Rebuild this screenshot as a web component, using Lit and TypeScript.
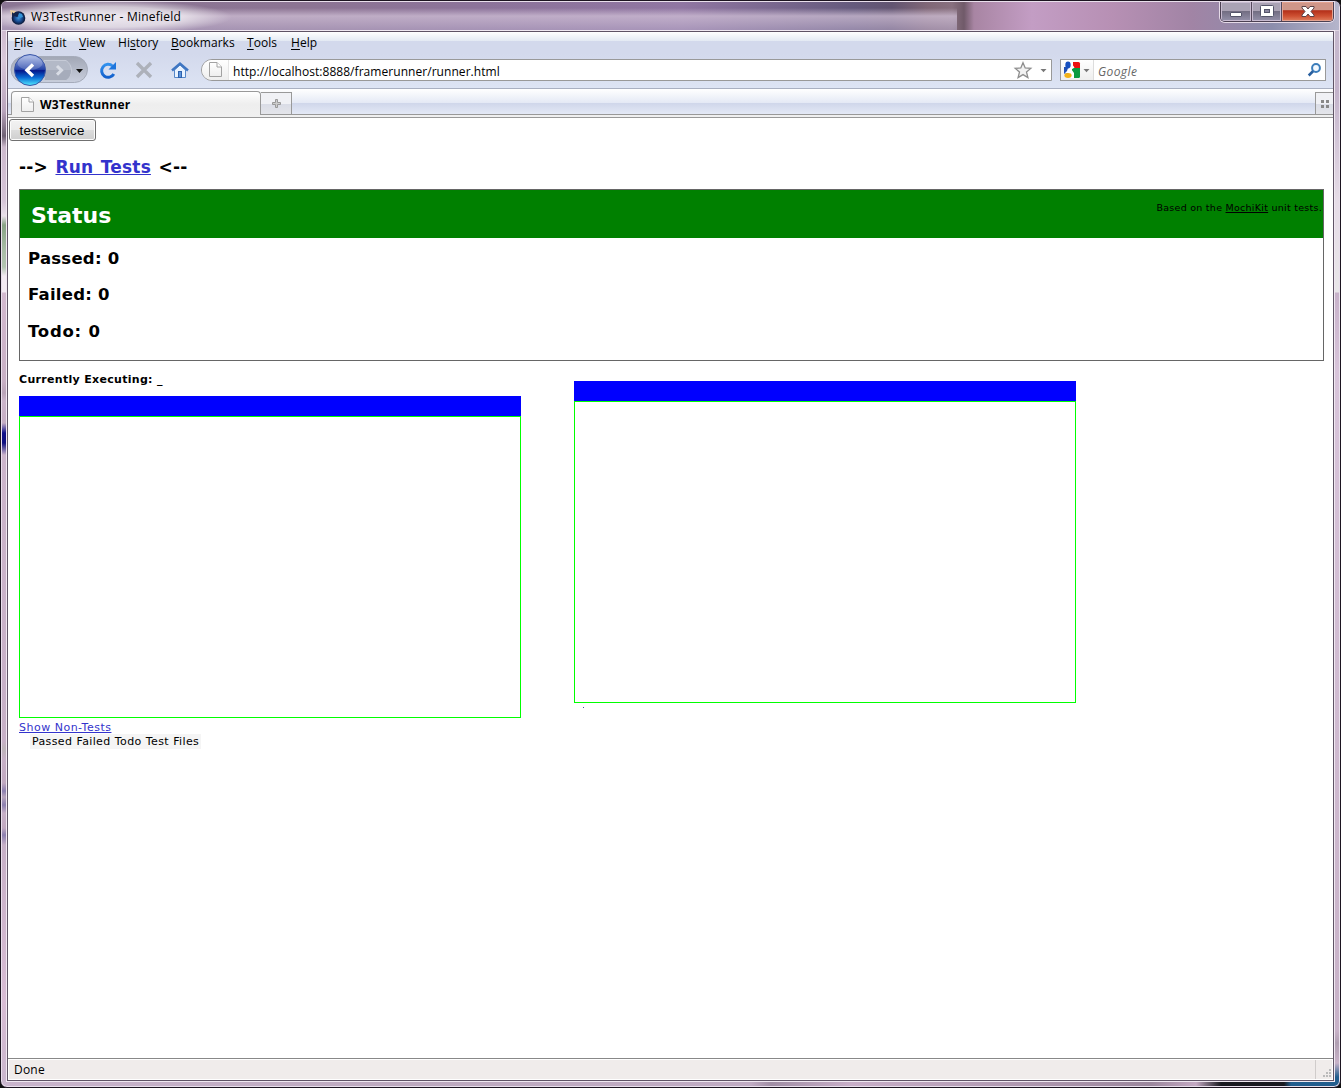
import { LitElement, html, css, svg } from "lit";
import { customElement } from "lit/decorators.js";

const MENU = [
  ["", "F", "ile", 19], ["", "E", "dit", 22], ["", "V", "iew", 27], ["Hi", "s", "tory", 41],
  ["", "B", "ookmarks", 64], ["", "T", "ools", 32], ["", "H", "elp", 27],
] as const;

const pageIcon = svg`<path d="M.5 .5H8L12.500 5V14.500H.5Z" fill="url(#pg)" stroke="#a2a2a2"/><path d="M8 .5V5H12.500" fill="#fff" stroke="#a2a2a2"/>
  <defs><linearGradient id="pg" x2="0" y2="1"><stop offset="0" stop-color="#fff"/><stop offset="1" stop-color="#eee"/></linearGradient></defs>`;

@customElement("app-root")
export class AppRoot extends LitElement {
  static styles = css`
    :host { display: block; width: 1341px; height: 1088px; overflow: hidden; background: #111; font-family: "Open Sans", "Noto Sans", sans-serif; font-size: 12px; color: #000; }
    * { box-sizing: border-box; }
    svg { display: block; flex: none; }
    .window { height: 1088px; border: 1px solid #1c1420; border-radius: 7px; box-shadow: inset 0 0 0 1px #e9dfec; padding: 1px 6px 6px; display: flex; flex-direction: column; overflow: hidden;
      background:
        linear-gradient(180deg, #c5aec5 0, #d9c8da 60px, #b9a4bc 110px, #6f6174 135px, #cdb9cd 146px, #d6c5d8 200px, #e9e0ea 215px, #88a385 224px, #a9bda6 250px, #b3c5b1 266px, #f3eaf2 275px, #f3eaf2 291px, #d3b9cf 292px, #c8b0c5 380px, #b9a4b8 392px, #cbb5ca 400px, #c5aec4 422px, #10108a 432px, #10107e 442px, #ccb5cb 454px, #c7b0c7 740px, #bdb4b9 748px, #c7b0c7 758px, #c1a9c0 782px, #8d80b0 790px, #b9a5bd 796px, #8d80b0 804px, #c7b0c7 812px, #c1a9c0 827px, #8d80b0 834px, #c7b0c7 844px, #d8bcd4 1000px, #c9b6cd 1088px) 0 0 / 8px 1086px no-repeat,
        linear-gradient(180deg, #c8bdd0 0, #c3b3ca 90px, #e6dce7 200px, #e8e5e8 291px, #c8b2ca 292px, #d8c4da 370px, #c8b2c8 1030px, #b09fb2 1042px, #c8b2c8 1062px, #225e8e 1076px) 1332px 0 / 8px 1086px no-repeat,
        linear-gradient(90deg, #c9b4cc 0, #bda9bf 400px, #c0abc3 750px, #a18ea5 770px, #c8aec8 850px, #9c879d 1150px, #c4a9c3 1195px, #191a20 1220px, #191a20 1283px, #225e8e 1290px) 0 1079px / 100% 9px no-repeat, #c3b3ca; }
    .title { height: 29px; margin: 0 -5px; padding-left: 8px; display: flex; align-items: flex-start; border-bottom: 1px solid #e0d5e3;
      background: radial-gradient(ellipse 125px 17px at 105px 15px, #fffb 0, #fff9 60%, #fff0 100%),
        linear-gradient(180deg, #d0c0d600 0, #d0c0d600 6px, #d0c0d6c0 14px, #b9abca90 28px) 0 0 / 955px 100% no-repeat,
        linear-gradient(90deg, #8b7694 0, #8c7493 300px, #8c739a 480px, #9076a2 680px, #655a7d 850px, #625471 890px, #806777 925px, #88707f 950px, #705a69 962px, #a885a3 972px, #c39dc4 1030px, #b790b4 1110px, #a184a5 1190px, #8c8dac 1270px, #b5b5cb 100%); }
    .title-icon { margin: 6px 5px 0 0; }
    .title-text { flex: 1; line-height: 29px; letter-spacing: .23px; }
    .controls { display: flex; margin-right: 5px; height: 20px; border: 1px solid #4b4052; border-top: 0; border-radius: 0 0 5px 5px; overflow: hidden; box-shadow: 0 0 0 1px #e5dae7; }
    .ctl { display: grid; place-items: center; width: 31px; border-right: 1px solid #55495c; box-shadow: inset 0 0 0 1px #c8bbd0; background: linear-gradient(#aaa2b4 0 45%, #706b80 46%, #9591aa); }
    .ctl.max { width: 30px; }
    .ctl.close { width: 51px; border-right: 0; box-shadow: inset 0 0 0 1px #e3a391; background: linear-gradient(#cf9689 0 40%, #b4301a 46%, #cf5234 75%, #df8060); }
    .ctl svg { margin-top: -1px; }
    .client { flex: 1; min-height: 0; display: flex; flex-direction: column; border: 1px solid #5f5365; background: #fff; margin: 0; box-shadow: 0 0 0 1px #f0e8f1; }
    .menu { height: 22px; flex: none; display: flex; gap: 12px; padding-left: 6px; line-height: 22px; background: linear-gradient(#fff 0, #e3e9f3 9px, #d3d9ec 9px); }
    .mi { white-space: nowrap; letter-spacing: .06px; }
    .u { text-decoration: underline; text-underline-offset: 2px; }
    .nav { height: 35px; flex: none; display: flex; align-items: flex-start; border-bottom: 1px solid #a9b0c2; background: linear-gradient(#d3d9ec 0, #dde4f4); }
    .navicons { margin-left: 2px; }
    .url { display: flex; width: 851px; height: 22px; margin-top: 5px; border: 1px solid #999; border-radius: 11px 0 0 11px; background: #fff; overflow: hidden; }
    .ident { width: 27px; padding: 2px 0 0 7px; background: linear-gradient(#fff, #eee); border-right: 1px solid #e5e5e5; }
    .addr { flex: 1; padding-left: 4px; line-height: 23px; letter-spacing: .05px; }
    .search { display: flex; width: 266px; height: 22px; margin: 5px 0 0 8px; border: 1px solid #999; background: #fff; }
    .engine { width: 33px; background: linear-gradient(#fff, #eee); border-right: 1px solid #ddd; }
    .ph { flex: 1; padding-left: 4px; line-height: 23px; font-style: italic; color: #666; letter-spacing: .4px; }
    .tabs { height: 26px; flex: none; display: flex; border-bottom: 1px solid #999; background: linear-gradient(#fff 0, #e4e9f5 14px, #cfd6ea 14px, #e4e9f6); }
    .tab { display: flex; width: 250px; height: 26px; margin: 2px 0 -1px 3px; padding: 5px 0 0 9px; border: 1px solid #999; border-bottom: 0; border-radius: 4px 4px 0 0; background: linear-gradient(#fff 0, #eee 12px, #f0f0f0); font-weight: 700; }
    .tab-text { margin: -1px 0 0 6px; line-height: 18px; letter-spacing: .22px; }
    .plus { width: 31px; height: 23px; margin-top: 3px; border: 1px solid #999; border-left: 0; display: grid; place-items: center; background: linear-gradient(#f0f1f5 0 50%, #d9dce6 50%, #e4e5ea); }
    .grow { flex: 1; }
    .alltabs { width: 18px; height: 22px; margin-top: 3px; border: solid #999; border-width: 1px 0 0 1px; padding: 7px 0 0 5px; background: linear-gradient(#f0f1f5 0 50%, #d9dce6 50%, #e4e5ea); }
    .strip { height: 3px; flex: none; background: #f0f0f0; border-bottom: 1px solid #999; }
    .page { flex: 1; min-height: 0; font-family: "DejaVu Sans", sans-serif; font-size: 11px; }
    .btn { display: block; margin: 1px 0 0 1px; width: 87px; height: 22px; padding: 1px 1px 0 0; border: 1px solid #707070; border-radius: 3px; box-shadow: inset 0 0 0 1px #fcfcfc; background: linear-gradient(#f2f2f2, #ebebeb 50%, #ddd 50%, #cfcfcf); font: 13.33px/20px "Liberation Sans", sans-serif; letter-spacing: .1px; color: #000; }
    .body { padding: 0 9px 0 11px; }
    .run { margin: 0; padding-top: 15px; font-size: 17px; line-height: 22px; font-weight: 700; height: 48px; letter-spacing: .17px; word-spacing: 1.5px; }
    .link { color: #33c; text-decoration: underline; }
    .box { height: 172px; border: 1px solid #666; }
    .head { height: 48px; background: #008000; display: flex; justify-content: space-between; }
    .h1 { margin: 0 0 0 11px; font-size: 22px; line-height: 52px; letter-spacing: -.04px; color: #fff; }
    .credit { font-size: 9.500px; line-height: 36px; padding-right: 1px; white-space: nowrap; letter-spacing: .265px; }
    .stat { margin: 0 0 0 8px; font-size: 16.500px; line-height: 36px; font-weight: 700; height: 36px; letter-spacing: .25px; }
    .stat.todo { padding-top: 1px; letter-spacing: .75px; }
    .stats { padding-top: 3px; }
    .cols { display: flex; gap: 53px; }
    .left { width: 502px; }
    .exec { font-weight: 700; line-height: 16px; padding-top: 11px; height: 35px; white-space: nowrap; letter-spacing: .31px; }
    .bar { width: 502px; height: 20px; background: #00f; }
    .frame { width: 502px; height: 302px; border: 1px solid #0f0; }
    .right { padding-top: 20px; }
    .dot { width: 1px; height: 1px; margin: 4px 0 0 9px; background: #4747a0; }
    .nt { line-height: 19px; height: 16px; letter-spacing: .5px; }
    .files { display: inline-block; margin-left: 11px; padding: 0 2px; height: 15px; line-height: 15px; background: #f5f5f5; white-space: nowrap; word-spacing: .4px; letter-spacing: .36px; }
    .status { height: 21px; flex: none; display: flex; border: 1px solid #fff; box-shadow: 0 -1px #888; background: #f0eceb; padding-left: 5px; line-height: 20px; letter-spacing: .2px; }
    .grip { width: 17px; border-left: 1px solid #d0cccb; padding: 9px 0 0 7px; }
  `;

  render() {
    return html`<div class="window">
      <div class="title">
        <svg class="title-icon" width="16" height="18" viewBox="0 0 16 18"><defs><radialGradient id="gl"><stop offset="0" stop-color="#3c96dc"/><stop offset=".5" stop-color="#1a4f96"/><stop offset="1" stop-color="#091433"/></radialGradient></defs><path d="M0 2L6 3 3 8 1 6Z" fill="#e9cda0"/><circle cx="8.500" cy="10" r="6.800" fill="url(#gl)"/><path d="M2 4l2 2 2-2 3 1 1 2-3 2-3-1-2 2Z" fill="#14264d"/><path d="M9 5l3 1 1 3-3 1-2-2Z" fill="#3594d8"/></svg>
        <span class="title-text">W3TestRunner - Minefield</span>
        <div class="controls">
          <div class="ctl"><svg width="14" height="14"><rect x="1.500" y="8.500" width="11" height="4" rx=".5" fill="#fff" stroke="#55556b"/></svg></div>
          <div class="ctl max"><svg width="14" height="14"><rect x=".5" y="1.500" width="13" height="11" rx="1" fill="#fff" stroke="#55556b"/><rect x="4.500" y="5.500" width="5" height="3" fill="#8b87a0" stroke="#55556b"/></svg></div>
          <div class="ctl close"><svg width="14" height="13"><path d="M1 1.500H5L7 4 9 1.500H13V3L10 6.500 13 10V11.500H9L7 9 5 11.500H1V10L4 6.500 1 3Z" fill="#fff" stroke="#5b4146"/></svg></div>
        </div>
      </div>
      <div class="client">
        <div class="menu">${MENU.map(([a, b, c, w]) => html`<span class="mi" style="width:${w}px">${a}<span class="u">${b}</span>${c}</span>`)}</div>
        <div class="nav">
          <svg class="navicons" width="191" height="34" viewBox="10 54 191 34">
            <defs><linearGradient id="bk" x2="0" y2="1"><stop offset="0" stop-color="#aabbe9"/><stop offset=".48" stop-color="#2544a8"/><stop offset=".52" stop-color="#04178b"/><stop offset=".75" stop-color="#0a6ed5"/><stop offset="1" stop-color="#52eaff"/></linearGradient>
            <linearGradient id="fw" x2="0" y2="1"><stop offset="0" stop-color="#a2a7b5"/><stop offset="1" stop-color="#c8cedd"/></linearGradient>
            <linearGradient id="rl" x2="0" y2="1"><stop offset="0" stop-color="#3191ee"/><stop offset="1" stop-color="#1360cc"/></linearGradient></defs>
            <rect x="11" y="56.500" width="76.500" height="26" rx="13" fill="url(#fw)" stroke="#a5abba"/>
            <path d="M44 60.500H66Q71 64 71.500 70 71 77 66 80.500H44Z" fill="#b3b9c7" stroke="#c6cbd7"/><path d="M45 70H71Q71 77 66 80H45Z" fill="#a6acbb"/>
            <path d="M57 66L61.500 70.300 57 74.600" fill="none" stroke="#d8dce5" stroke-width="3"/>
            <circle cx="30" cy="70" r="15.500" fill="url(#bk)" stroke="#3955a6"/><ellipse cx="30" cy="63" rx="12.500" ry="7" fill="#fff" opacity=".2"/>
            <path d="M33 64.500L27 70.300 33 76" fill="none" stroke="#fff" stroke-width="3.400"/>
            <path d="M76 69H83L79.500 73Z" fill="#111"/>
            <path d="M113.800 74A6.500 6.500 0 1 1 112.500 66" fill="none" stroke="url(#rl)" stroke-width="3"/><path d="M116 62V69.500H108.500Z" fill="#1d75dd"/>
            <path d="M137 63L151 77M151 63L137 77" stroke="#adb1ba" stroke-width="3.400"/>
            <path d="M174.500 70V77.500H185.500V70L180 65Z" fill="#e8f2ff" stroke="#5687c8"/><path d="M172 70.500L180 63.500 188 70.500" fill="none" stroke="#3f76c2" stroke-width="2.400"/><rect x="178.500" y="71.500" width="3" height="6" fill="#5c94dc" stroke="#2d62ad"/>
          </svg>
          <div class="url"><div class="ident"><svg width="14" height="16">${pageIcon}</svg></div><span class="addr">http://localhost:8888/framerunner/runner.html</span>
            <svg width="40" height="20" viewBox="1011 60 40 20"><path d="M1023 62.700L1025.200 68 1030.800 68.400 1026.500 72 1027.900 77.600 1023 74.600 1018.100 77.600 1019.500 72 1015.200 68.400 1020.800 68Z" fill="#f2f2f2" stroke="#8e8e8e" stroke-width="1.300"/><path d="M1040.500 69H1046.500L1043.500 72.300Z" fill="#777"/></svg></div>
          <div class="search"><div class="engine"><svg width="32" height="20" viewBox="1061 60 32 20"><path d="M1072 62H1078.500Q1080 62 1080 63.500V69H1072Z" fill="#ed1111"/><path d="M1072 68H1080V76.500Q1080 78 1078.500 78H1072Z" fill="#0a9a40"/><path d="M1064 67H1069L1072 71 1070 74H1064Z" fill="#2050b4"/><path d="M1070 62H1073V65.500L1074.500 67.500 1071.500 69.500 1074 73V78H1071L1068 73 1064 74 1067 71Z" fill="#fff"/><ellipse cx="1068" cy="65" rx="2.700" ry="3.400" fill="#1650c0"/><ellipse cx="1068" cy="75.500" rx="3.600" ry="2.400" fill="#f3b114"/><path d="M1083.500 69H1089.500L1086.500 72.300Z" fill="#777"/></svg></div><span class="ph">Google</span>
            <svg width="20" height="20" viewBox="1305 60 20 20"><circle cx="1316" cy="68" r="3.900" fill="#f3f9ff" stroke="#3c7dbb" stroke-width="2"/><path d="M1313 71.300L1308.700 75.500" stroke="#285f9f" stroke-width="2.600"/></svg></div>
        </div>
        <div class="tabs">
          <div class="tab"><svg width="13" height="15">${pageIcon}</svg><span class="tab-text">W3TestRunner</span></div>
          <div class="plus"><svg width="9" height="9"><path d="M3.500 .5H5.500V3.500H8.500V5.500H5.500V8.500H3.500V5.500H.5V3.500H3.500Z" fill="#ccc" stroke="#999"/></svg></div>
          <div class="grow"></div>
          <div class="alltabs"><svg width="8" height="8"><path d="M0 0h3v3H0zM5 0h3v3H5zM0 5h3v3H0zM5 5h3v3H5z" fill="#888"/></svg></div>
        </div>
        <div class="strip"></div>
        <div class="page">
          <button class="btn">testservice</button>
          <div class="body">
            <h2 class="run">--&gt; <a class="link">Run Tests</a> &lt;--</h2>
            <div class="box">
              <div class="head"><h1 class="h1">Status</h1><span class="credit">Based on the <u>MochiKit</u> unit tests.</span></div>
              <div class="stats"><div class="stat">Passed: 0</div><div class="stat">Failed: 0</div><div class="stat todo">Todo: 0</div></div>
            </div>
            <div class="cols">
              <div class="left"><div class="exec">Currently Executing: _</div><div class="bar"></div><div class="frame"></div>
                <div class="nt"><a class="link">Show Non-Tests</a></div><div class="files">Passed Failed Todo Test Files</div></div>
              <div class="right"><div class="bar"></div><div class="frame"></div><div class="dot"></div></div>
            </div>
          </div>
        </div>
        <div class="status"><span class="grow">Done</span><div class="grip"><svg width="8" height="8"><path d="M6 0h2v2H6zM3 3h2v2H3zM6 3h2v2H6zM0 6h2v2H0zM3 6h2v2H3zM6 6h2v2H6z" fill="#bbb"/></svg></div></div>
      </div>
    </div>`;
  }
}
